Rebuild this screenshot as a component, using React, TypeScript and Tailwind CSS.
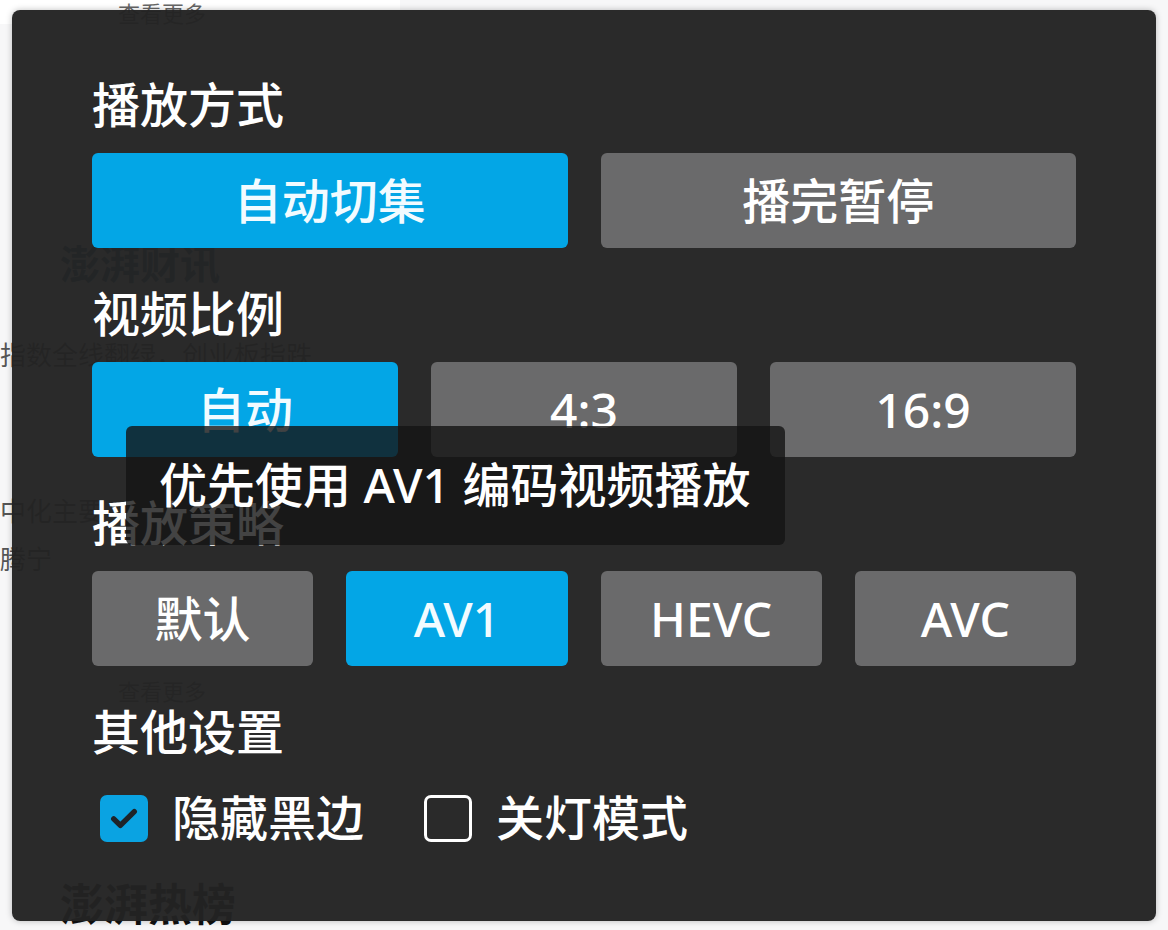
import { Fragment } from "react";

const groups = [
	{ title: "播放方式", options: ["自动切集", "播完暂停"], active: 0, cols: "grid-cols-2" },
	{ title: "视频比例", options: ["自动", "4:3", "16:9"], active: 0, cols: "grid-cols-3" },
	{ title: "播放策略", options: ["默认", "AV1", "HEVC", "AVC"], active: 1, cols: "grid-cols-4" },
];

function CheckItem({ label, checked }: { label: string; checked: boolean }) {
	return (
		<label className="flex items-center gap-[24px]">
			{checked ? (
				<span className="grid h-[47px] w-[48px] place-items-center rounded-[7px] bg-[#0aa3e2]">
					<svg viewBox="0 0 24 24" className="size-[38px]" fill="none">
						<path d="M5.5 12.5l4.2 4.2L18.5 8" stroke="#1e2328" strokeWidth="3.4" strokeLinecap="round" strokeLinejoin="round" />
					</svg>
				</span>
			) : (
				<span className="h-[47px] w-[48px] rounded-[7px] border-[3px] border-white" />
			)}
			<span>{label}</span>
		</label>
	);
}

export default function App() {
	return (
		<div className="relative h-[930px] w-[1168px] overflow-hidden bg-[#f7f7f8] font-['Noto_Sans','Noto_Sans_CJK_SC',sans-serif]">
			{/* page behind the popup */}
			<div className="w-[400px] bg-white pl-[118px] text-[22px] leading-none text-[#666]">
				<p className="pt-[2px]">查看更多</p>
			</div>
			<div className="w-[400px] pl-[60px] pt-[220px] text-[40px] font-bold leading-none text-[#1d5f8a]">澎湃财讯</div>
			<p className="pt-[58px] text-[26px] leading-none text-[#555]">指数全线翻绿，创业板指跌</p>
			<p className="pt-[130px] text-[26px] leading-none text-[#555]">中化主要</p>
			<p className="pt-[22px] text-[26px] leading-none text-[#555]">腾宁</p>
			<p className="pl-[118px] pt-[108px] text-[22px] leading-none text-[#666]">查看更多</p>
			<p className="pl-[60px] pt-[180px] text-[44px] font-bold leading-none text-[#111]">澎湃热榜</p>

			{/* settings popup */}
			<div className="absolute left-[12px] top-[10px] h-[911px] w-[1144px] rounded-[8px] bg-[#232323]/[0.97] px-[80px] pt-[67px] text-[48px] font-medium leading-none text-white shadow-[0_0_6px_rgba(0,0,0,0.25)]">
				{groups.map((g, gi) => (
					<Fragment key={g.title}>
						<h3 className={`flex h-14 items-center ${gi > 0 ? "mt-[38px]" : ""}`}>{g.title}</h3>
						<div className={`mt-5 grid gap-[33px] ${g.cols}`}>
							{g.options.map((o, i) => (
								<button
									key={o}
									className={`h-[95px] rounded-[6px] text-[48px] font-medium ${
										i === g.active ? "bg-[#03a6e6] text-[#f2fbff]" : "bg-[#6a6a6b] text-white"
									}`}
								>
									{o}
								</button>
							))}
						</div>
					</Fragment>
				))}
				<h3 className="mt-[38px] flex h-14 items-center">其他设置</h3>
				<div className="mt-[30px] flex h-14 items-center gap-[60px] pl-[8px]">
					<CheckItem label="隐藏黑边" checked />
					<CheckItem label="关灯模式" checked={false} />
				</div>

				<div className="absolute left-[114px] top-[416px] flex h-[119px] w-[659px] items-center rounded-[6px] bg-[#141414]/80 pl-[33px] pb-[2px] text-[48px]">
					优先使用 AV1 编码视频播放
				</div>
			</div>
		</div>
	);
}
